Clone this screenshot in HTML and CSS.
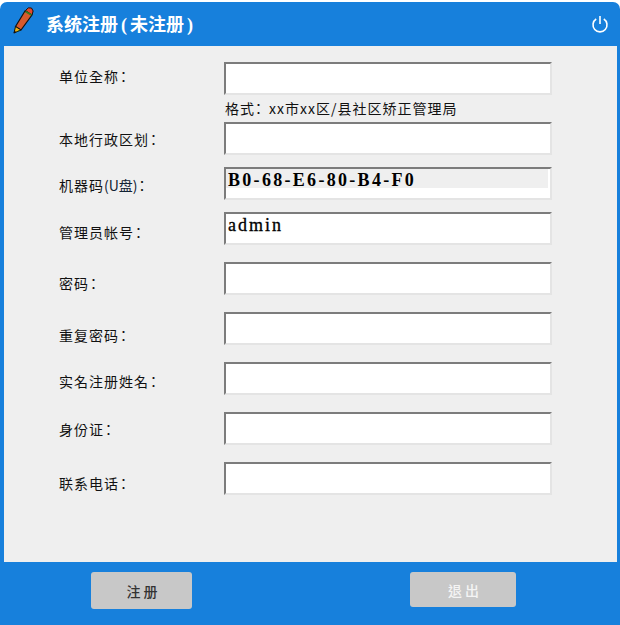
FILE: index.html
```html
<!DOCTYPE html>
<html>
<head lang="zh">
    <meta charset="UTF-8">
    <title>系统注册</title>
    <link rel="stylesheet" href="styles.css">
</head>
<body>
    <div id="window">
        <div id="header">
            <svg class="pencil" width="22" height="28" viewBox="0 0 22 28">
                <path d="M13 5 L20 9 L9 24 L3.5 20.5 Z" fill="#d65a2e" stroke="#111" stroke-width="1.2"/>
                <path d="M13.5 4.5 Q16 0.5 19.5 2 Q22.5 4.5 20 9 Z" fill="#e8482a" stroke="#111" stroke-width="1"/>
                <path d="M13.5 5.5 L19.5 9" stroke="#3a7d1e" stroke-width="1.6"/>
                <path d="M3.5 20.5 L9 24 L2 27 Z" fill="#f0b010" stroke="#111" stroke-width="1"/>
                <path d="M6 24.5 L8 24 L5 26 Z" fill="#2c7a1c"/>
                <path d="M2.5 24.5 L4 26 L1.5 27.5 Z" fill="#111"/>
            </svg>
            <h1 id="title">系统注册<span class="paren">(</span>未注册<span class="paren">)</span></h1>
            <svg class="power" width="18" height="20" viewBox="0 0 18 20">
                <path d="M5.2 5 A7 7 0 1 0 12.8 5" fill="none" stroke="#fff" stroke-width="1.6"/>
                <path d="M9 2 V10" fill="none" stroke="#fff" stroke-width="1.6"/>
            </svg>
        </div>
        <div id="panel">
            <div class="row">
                <label>单位全称<span class="colon">：</span></label>
                <input type="text">
            </div>
            <p class="hint">格式<span class="colon">：</span>xx市xx区/县社区矫正管理局</p>
            <div class="row">
                <label>本地行政区划<span class="colon">：</span></label>
                <input type="text">
            </div>
            <div class="row">
                <label>机器码<span class="small">(U盘)</span><span class="colon">：</span></label>
                <input type="text" class="machine" value="B0-68-E6-80-B4-F0">
            </div>
            <div class="row">
                <label>管理员帐号<span class="colon">：</span></label>
                <input type="text" class="account" value="admin">
            </div>
            <div class="row wide">
                <label>密码<span class="colon">：</span></label>
                <input type="text">
            </div>
            <div class="row wide">
                <label>重复密码<span class="colon">：</span></label>
                <input type="text">
            </div>
            <div class="row wide">
                <label>实名注册姓名<span class="colon">：</span></label>
                <input type="text">
            </div>
            <div class="row wide">
                <label>身份证<span class="colon">：</span></label>
                <input type="text">
            </div>
            <div class="row wide">
                <label>联系电话<span class="colon">：</span></label>
                <input type="text">
            </div>
        </div>
        <div id="footer">
            <button id="register">注册</button>
            <button id="quit">退出</button>
        </div>
    </div>
</body>
</html>
```

FILE: styles.css
```css
*{
    padding: 0;
    margin: 0;
    box-sizing: border-box;
}
html, body{
    background: #fff;
}
body{
    padding-top: 2px;
    font-family: "Noto Sans CJK TC", "Liberation Sans", sans-serif;
}
#window{
    width: 620px;
    height: 623px;
    background: #1780dc;
    border-radius: 7px 7px 0 0;
    display: flex;
    flex-direction: column;
}
#header{
    height: 44px;
    padding: 0 11px 0 12px;
    display: flex;
    align-items: center;
    color: #fff;
}
.pencil{
    align-self: flex-start;
    margin-top: 4px;
}
#title{
    margin-left: 12px;
    font-size: 18px;
    font-weight: 700;
    line-height: 24px;
    color: #fff;
    flex: 1;
}
.paren{
    font-family: "Liberation Serif", serif;
    padding: 0 3px;
}
#panel{
    height: 516px;
    margin: 0 3px 0 4px;
    padding: 16px 0 0 55px;
    background: #efefef;
}
.row{
    display: flex;
    margin-bottom: 12px;
}
.row label{
    width: 165px;
    font-size: 14px;
    letter-spacing: 1px;
    line-height: 20px;
    color: #111;
}
.colon{
    font-feature-settings: "palt";
    padding-left: 1px;
}
.small{
    font-size: 14px;
    letter-spacing: 0;
    color: #123;
}
.row input{
    width: 328px;
    height: 33px;
    padding: 0 0 6px 2px;
    border-style: solid;
    border-width: 2px 2px 2px 2px;
    border-color: #7c7c7c #e4e4e4 #e4e4e4 #7c7c7c;
    outline: none;
    background: #fff;
    font-family: "Liberation Serif", serif;
    font-size: 18px;
    letter-spacing: 2px;
    color: #000;
}
.row input.machine{
    font-weight: bold;
    letter-spacing: 2.3px;
    background: linear-gradient(#efefef, #efefef) 0 0 / calc(100% - 2px) 19px no-repeat, #fff;
}
.row input.account{
    -webkit-text-stroke: 0.3px #000;
}
.wide{
    margin-bottom: 17px;
}
.hint{
    height: 27px;
    margin: -12px 0 0 166px;
    padding-top: 3px;
    font-size: 14px;
    letter-spacing: 1px;
    line-height: 20px;
    color: #111;
}
.hint .colon{
    padding: 0 6px 0 0;
}
.row:nth-of-type(1) label{ padding-top: 4px; }
.row:nth-of-type(2) label{ padding-top: 7px; }
.row:nth-of-type(3) label{ padding-top: 8px; }
.row:nth-of-type(4){ margin-bottom: 17px; }
.row:nth-of-type(4) label{ padding-top: 10px; }
.row:nth-of-type(5) label{ padding-top: 11px; }
.row:nth-of-type(6) label{ padding-top: 13px; }
.row:nth-of-type(7) label{ padding-top: 9px; }
.row:nth-of-type(8) label{ padding-top: 7px; }
.row:nth-of-type(9) label{ padding-top: 11px; }
#footer{
    flex: 1;
    padding: 10px 0 0 91px;
    display: flex;
    align-items: flex-start;
    gap: 218px;
}
#footer button{
    border: none;
    border-radius: 3px;
    background: #c8c8c8;
    padding-left: 4px;
    font-family: "Noto Sans CJK TC", sans-serif;
    font-size: 14px;
    font-weight: 500;
    letter-spacing: 3px;
}
#register{
    width: 101px;
    height: 37px;
    color: #333;
}
#quit{
    width: 106px;
    height: 35px;
    color: #f4f4f4;
}
```
